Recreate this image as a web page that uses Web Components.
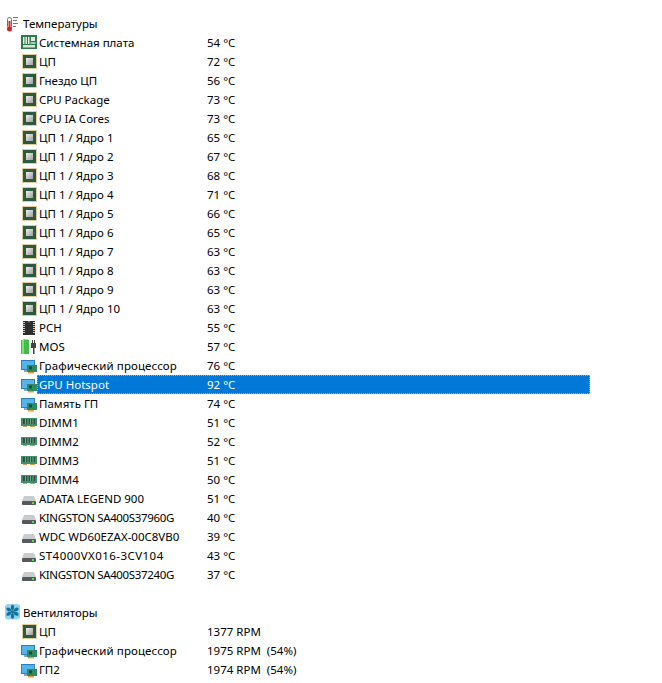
<!DOCTYPE html>
<html>
<head>
<meta charset="utf-8">
<style>
  html, body { margin: 0; background: #ffffff; }
  body { font-family: "Noto Sans", "Open Sans", sans-serif; font-size: 11.5px; color: #000; }
</style>
</head>
<body>
<sensor-panel>
  <sensor-group icon="therm" label="Температуры">
    <sensor-row icon="mb" label="Системная плата" value="54 °C"></sensor-row>
    <sensor-row icon="cpu" label="ЦП" value="72 °C"></sensor-row>
    <sensor-row icon="cpu" label="Гнездо ЦП" value="56 °C"></sensor-row>
    <sensor-row icon="cpu" label="CPU Package" value="73 °C"></sensor-row>
    <sensor-row icon="cpu" label="CPU IA Cores" value="73 °C"></sensor-row>
    <sensor-row icon="cpu" label="ЦП 1 / Ядро 1" value="65 °C"></sensor-row>
    <sensor-row icon="cpu" label="ЦП 1 / Ядро 2" value="67 °C"></sensor-row>
    <sensor-row icon="cpu" label="ЦП 1 / Ядро 3" value="68 °C"></sensor-row>
    <sensor-row icon="cpu" label="ЦП 1 / Ядро 4" value="71 °C"></sensor-row>
    <sensor-row icon="cpu" label="ЦП 1 / Ядро 5" value="66 °C"></sensor-row>
    <sensor-row icon="cpu" label="ЦП 1 / Ядро 6" value="65 °C"></sensor-row>
    <sensor-row icon="cpu" label="ЦП 1 / Ядро 7" value="63 °C"></sensor-row>
    <sensor-row icon="cpu" label="ЦП 1 / Ядро 8" value="63 °C"></sensor-row>
    <sensor-row icon="cpu" label="ЦП 1 / Ядро 9" value="63 °C"></sensor-row>
    <sensor-row icon="cpu" label="ЦП 1 / Ядро 10" value="63 °C"></sensor-row>
    <sensor-row icon="pch" label="PCH" value="55 °C"></sensor-row>
    <sensor-row icon="mos" label="MOS" value="57 °C"></sensor-row>
    <sensor-row icon="gpu" label="Графический процессор" value="76 °C" spacing="0.1px"></sensor-row>
    <sensor-row icon="gpu" label="GPU Hotspot" value="92 °C" selected></sensor-row>
    <sensor-row icon="gpu" label="Память ГП" value="74 °C"></sensor-row>
    <sensor-row icon="dimm" label="DIMM1" value="51 °C"></sensor-row>
    <sensor-row icon="dimm" label="DIMM2" value="52 °C"></sensor-row>
    <sensor-row icon="dimm" label="DIMM3" value="51 °C"></sensor-row>
    <sensor-row icon="dimm" label="DIMM4" value="50 °C"></sensor-row>
    <sensor-row icon="hdd" label="ADATA LEGEND 900" value="51 °C"></sensor-row>
    <sensor-row icon="hdd" label="KINGSTON SA400S37960G" value="40 °C" spacing="-0.35px"></sensor-row>
    <sensor-row icon="hdd" label="WDC WD60EZAX-00C8VB0" value="39 °C"></sensor-row>
    <sensor-row icon="hdd" label="ST4000VX016-3CV104" value="43 °C" spacing="0.45px"></sensor-row>
    <sensor-row icon="hdd" label="KINGSTON SA400S37240G" value="37 °C" spacing="-0.35px"></sensor-row>
  </sensor-group>
  <sensor-group icon="fan" label="Вентиляторы">
    <sensor-row icon="cpu" label="ЦП" value="1377 RPM"></sensor-row>
    <sensor-row icon="gpu" label="Графический процессор" value="1975 RPM  (54%)" spacing="0.1px"></sensor-row>
    <sensor-row icon="gpu" label="ГП2" value="1974 RPM  (54%)"></sensor-row>
  </sensor-group>
</sensor-panel>

<script>
  const blade = 'M0 -1C-2.500 -3 -2 -6.500 0 -7C2 -6.500 2.500 -3 0 -1z'

  const ICONS = {
    therm: `
      <rect x="3.500" y="3.500" width="4" height="11" rx="2" fill="#fff" stroke="#7d6a6a"/>
      <rect x="4.500" y="7" width="2" height="8" fill="#d8232a"/>
      <circle cx="5.500" cy="15" r="2.500" fill="#d8232a"/>
      <path d="M9 3.500h5M9 6.500h4M9 9.500h5M9 12.500h3" stroke="#777" stroke-width="1"/>`,
    fan: `
      <rect x="1" y="1" width="15" height="15.500" rx="3" fill="#93d3ef"/>
      <g fill="#14719c" transform="translate(8.500 8.700)">
        ${[0, 60, 120, 180, 240, 300].map(a => `<path d="${blade}" transform="rotate(${a})"/>`).join('')}
        <circle r="1.500"/>
      </g>`,
    mb: `
      <rect x="0" y="2" width="16" height="14" fill="#2f7a4b"/>
      <rect x="2" y="4" width="1.500" height="7" fill="#e8efe8"/>
      <rect x="4.500" y="4" width="1.500" height="7" fill="#e8efe8"/>
      <rect x="7" y="4" width="1.500" height="7" fill="#e8efe8"/>
      <rect x="10" y="4" width="4" height="4" fill="#dfe9e0"/>
      <rect x="9.500" y="9" width="5" height="2" fill="#a9c9b2"/>
      <rect x="2" y="12" width="12" height="2.500" fill="#d5e3d7"/>`,
    cpu: `
      <rect x="1" y="2" width="15" height="15" fill="#fff"/>
      <rect x="1.500" y="2.500" width="14" height="14" fill="none" stroke="#c8963a" stroke-dasharray="1 1"/>
      <rect x="2" y="3" width="13" height="13" fill="#2c5a40"/>
      <rect x="5" y="6" width="7" height="7" fill="url(#chip)"/>`,
    pch: `
      <rect x="2" y="3" width="12" height="14" fill="#2b2b2b"/>
      <path d="M2 4.500h12M2 6.500h12M2 8.500h12M2 10.500h12M2 12.500h12M2 14.500h12" stroke="#c9c9c9"/>
      <rect x="4" y="3" width="8" height="14" fill="#2e2e2e"/>
      <path d="M7 3h2v1.500H7z" fill="#777"/>`,
    mos: `
      <rect x="2" y="2" width="5" height="1.500" fill="#9ad79f"/>
      <rect x="0" y="3" width="8" height="14" fill="#3fbf45"/>
      <rect x="1" y="3" width="2" height="14" fill="#7fe07f"/>
      <rect x="11" y="3" width="1" height="4" fill="#444"/>
      <rect x="13" y="3" width="1" height="4" fill="#444"/>
      <rect x="10" y="6" width="5" height="5" fill="#3f4347"/>
      <rect x="12" y="10" width="1.500" height="7" fill="#3f4347"/>`,
    gpu: `
      <rect x="0" y="4" width="14" height="10" fill="#2e7fbd"/>
      <rect x="1" y="5" width="12" height="8" fill="#55b4ea"/>
      <rect x="3" y="14" width="6" height="2" fill="#8aa8bd"/>
      <rect x="6" y="9" width="10" height="7" fill="#2f8a5f"/>
      <rect x="8" y="10.500" width="3" height="3" fill="#1c4c36"/>
      <rect x="7" y="16" width="6" height="1.500" fill="#e4a23c"/>`,
    dimm: `
      <rect x="0" y="5" width="16" height="8" fill="#3d9068"/>
      <rect x="2" y="6" width="12" height="5" fill="#2f4f43"/>
      <path d="M4.500 6v5M7 6v5M9.500 6v5M12 6v5" stroke="#6fae90"/>
      <rect x="2" y="13" width="4" height="1" fill="#d99a4a"/>
      <rect x="9" y="13" width="5" height="1" fill="#d99a4a"/>`,
    hdd: `
      <path d="M3 7h10l2 5H1z" fill="#c9cbcd"/>
      <rect x="1" y="12" width="14" height="4" rx="1" fill="#55595c"/>
      <rect x="11" y="13" width="2" height="2" fill="#4fe04f"/>`
  }

  const chipDefs = `<defs><linearGradient id="chip" x1="0" y1="0" x2="1" y2="1">
    <stop offset="0" stop-color="#f0f0ee"/><stop offset="1" stop-color="#9c9f9c"/></linearGradient></defs>`

  customElements.define('sensor-panel',
    class extends HTMLElement {
      constructor() {
        super()
        const shadow = this.attachShadow({ mode: 'open' })
        shadow.innerHTML = `
          <style>
            :host { display: block; width: 590px; padding-top: 14px; }
          </style>
          <slot></slot>
        `
      }
    }
  )

  customElements.define('sensor-group',
    class extends HTMLElement {
      constructor() {
        super()
        const shadow = this.attachShadow({ mode: 'open' })
        shadow.innerHTML = `
          <style>
            :host { display: block; margin-bottom: 19px; }
            .head { display: flex; align-items: center; height: 19px; padding-left: 4px; }
            svg { display: block; flex: none; }
            .label { margin-left: 1px; line-height: 19px; }
          </style>
          <div class="head">
            <svg width="18" height="19" viewBox="0 0 18 19">${ICONS[this.getAttribute('icon')]}</svg>
            <span class="label">${this.getAttribute('label')}</span>
          </div>
          <slot></slot>
        `
      }
    }
  )

  customElements.define('sensor-row',
    class extends HTMLElement {
      constructor() {
        super()
        const shadow = this.attachShadow({ mode: 'open' })
        shadow.innerHTML = `
          <style>
            :host { display: flex; height: 19px; padding-left: 21px; line-height: 19px; white-space: pre; }
            svg { display: block; flex: none; }
            .main { flex: 1; display: grid; grid-template-columns: 168px 1fr; padding-left: 2px; box-sizing: border-box; }
            .label { letter-spacing: ${this.getAttribute('spacing') || 'normal'}; }
            :host([selected]) .main {
              background: #0078d7; color: #fff;
              outline: 1px dotted #f0a030; outline-offset: -1px;
            }
          </style>
          <svg width="16" height="19" viewBox="0 0 16 19">${chipDefs}${ICONS[this.getAttribute('icon')]}</svg>
          <div class="main">
            <span class="label">${this.getAttribute('label')}</span>
            <span>${this.getAttribute('value')}</span>
          </div>
        `
      }
    }
  )
</script>
</body>
</html>
